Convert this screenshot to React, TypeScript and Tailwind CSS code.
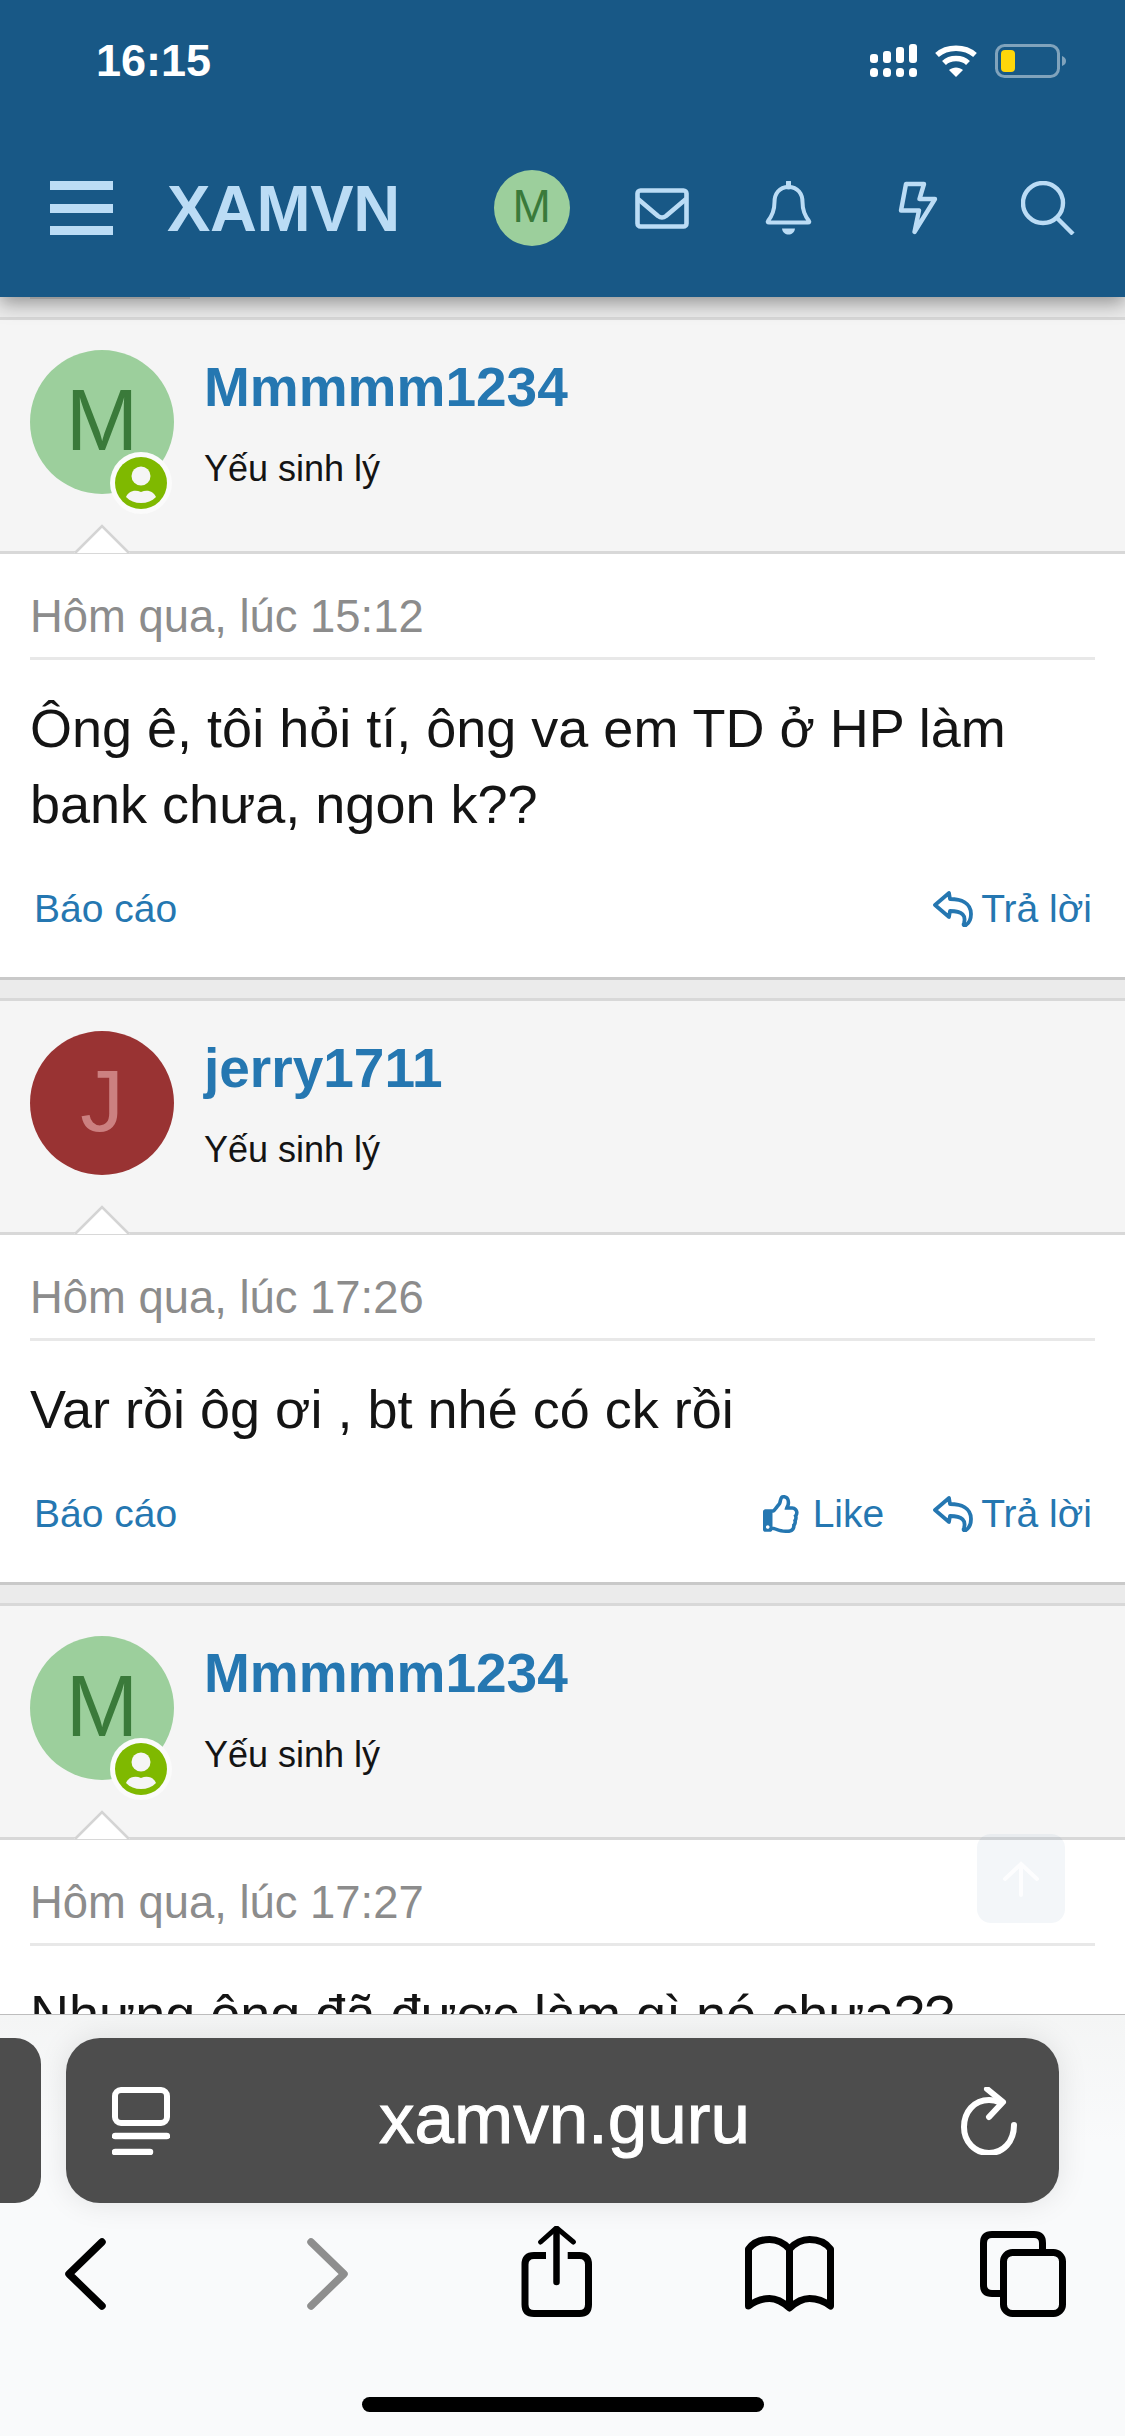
import React from "react";
import { FaRegThumbsUp } from "react-icons/fa";

const SANS = "font-['Liberation_Sans',Arial,sans-serif]";

function ReplyIcon() {
  return (
    <svg width="40" height="36" viewBox="0 0 40 36" fill="none" stroke="#2577b1" strokeWidth="3.8" strokeLinejoin="round" strokeLinecap="round">
      <path d="M2 14 L16 2 L17 8 C28 8 38 12 38 23 C38 28 36 32 33 34 C31 35 30 34 31 32 C33 25 30 20 17 20 L16 26 Z" />
    </svg>
  );
}

function Badge() {
  return (
    <div className="absolute right-[2px] bottom-[-20px] w-[62px] h-[62px] rounded-full bg-[#fbfbfb] flex items-center justify-center">
      <svg width="52" height="52" viewBox="0 0 52 52">
        <circle cx="26" cy="26" r="26" fill="#7fb900" />
        <circle cx="26" cy="19" r="9.5" fill="#f5f5f5" />
        <path d="M11 40 C13 35 19 32 26 35 C33 32 39 35 41 40 C37 44 32 46 26 46 C20 46 15 44 11 40 Z" fill="#f5f5f5" />
      </svg>
    </div>
  );
}

function Post({ name, letter, avatarBg, letterColor, badge, time, lines, like, clip }: {
  name: string; letter: string; avatarBg: string; letterColor: string; badge?: boolean; time: string; lines: string[]; like?: boolean; clip?: boolean;
}) {
  return (
    <div className="border-t-[3px] border-b-[3px] border-t-[#d8d8d8] border-b-[#c9c9c9] mb-[18px] bg-white shrink-0">
      <div className="relative h-[231px] bg-[#f5f5f5] flex pl-[30px] pt-[30px]">
        <div className={`relative w-[144px] h-[144px] rounded-full flex items-center justify-center text-[87px] leading-none pb-[6px] ${avatarBg} ${letterColor}`}>
          {letter}
          {badge && <Badge />}
        </div>
        <div className="ml-[30px] flex flex-col">
          <div className="text-[55px] leading-[60px] font-bold mt-[7px] text-[#2577b1]">{name}</div>
          <div className="text-[36px] leading-[44px] mt-[30px] text-[#141414]">Yếu sinh lý</div>
        </div>
        <svg className="absolute left-[74px] bottom-[-3px]" width="56" height="31" viewBox="0 0 56 31">
          <path d="M0 30 L28 2 L56 30 Z" fill="#ffffff" />
          <path d="M1 30 L28 3 L55 30" fill="none" stroke="#d4d4d4" strokeWidth="2.5" />
        </svg>
      </div>
      <div className="border-t-[3px] border-t-[#d8d8d8] px-[30px] pt-[33px]">
        <div className="h-[70px] pb-[10px] text-[45.4px] leading-[60px] text-[#8c8c8c]">{time}</div>
        <div className="h-[3px] bg-[#e8e8e8]" />
        <div className="pt-[30px] pb-[3px] text-[54px] leading-[76px] text-[#141414]">
          {lines.map((l) => <div key={l} className="whitespace-nowrap">{l}</div>)}
        </div>
        {!clip && (
          <div className="mt-[34px] pb-[38px] pl-[4px] pr-[3px] h-[98px] flex items-start justify-between text-[39px] leading-[60px] text-[#2577b1]">
            <span>Báo cáo</span>
            <div className="flex items-center h-[60px]">
              {like && (
                <div className="flex items-center mr-[49px]">
                  <FaRegThumbsUp className="w-[38px] h-[38px] mr-[12px] text-[#2577b1]" />
                  <span>Like</span>
                </div>
              )}
              <ReplyIcon />
              <span className="ml-[8px]">Trả lời</span>
            </div>
          </div>
        )}
      </div>
    </div>
  );
}

export default function App() {
  return (
    <div className={`relative w-[1125px] h-[2436px] overflow-hidden flex flex-col bg-[#ebebeb] ${SANS}`}>
      <header className="relative z-10 h-[297px] shrink-0 bg-[#185886] shadow-[0_6px_18px_rgba(0,0,0,0.38)]">
        <div className="h-[119px] flex items-start justify-between pl-[96px] pr-[58px] pt-[38px]">
          <span className="text-[45px] leading-[46px] font-bold text-white">16:15</span>
          <div className="flex items-center gap-[17px] pt-[6px]">
            <svg width="47" height="34" viewBox="0 0 47 34" fill="#ffffff">
              <rect x="0" y="10" width="8" height="9" rx="3" /><rect x="13" y="7" width="8" height="12" rx="3" /><rect x="26" y="3" width="8" height="16" rx="3" /><rect x="39" y="0" width="8" height="19" rx="3" />
              <rect x="0" y="24" width="8" height="9" rx="3.5" /><rect x="13" y="24" width="8" height="9" rx="3.5" /><rect x="26" y="24" width="8" height="9" rx="3.5" /><rect x="39" y="24" width="8" height="9" rx="3.5" />
            </svg>
            <svg width="44" height="34" viewBox="0 0 44 34" fill="none" stroke="#ffffff" strokeWidth="5.5">
              <path d="M3 11 C13 2 31 2 41 11" />
              <path d="M10 19 C16 13 28 13 34 19" />
              <path d="M22 33 L15 26 C19 22.5 25 22.5 29 26 Z" fill="#ffffff" stroke="none" />
            </svg>
            <svg width="72" height="34" viewBox="0 0 72 34">
              <rect x="1.5" y="1.5" width="62" height="31" rx="8" fill="none" stroke="#ffffff" strokeOpacity="0.45" strokeWidth="3" />
              <rect x="6" y="6" width="14" height="22" rx="4" fill="#ffd60a" />
              <path d="M67 12 C70 13 71 15 71 17 C71 19 70 21 67 22 Z" fill="#ffffff" fillOpacity="0.45" />
            </svg>
          </div>
        </div>
        <nav className="relative h-[178px]">
          <div className="flex items-center h-[178px] text-[#bbdcf5]">
            <div className="ml-[50px] w-[63px] h-[54px] flex flex-col justify-between">
              <div className="h-[9px] bg-[#bbdcf5]" /><div className="h-[9px] bg-[#bbdcf5]" /><div className="h-[9px] bg-[#bbdcf5]" />
            </div>
            <span className="ml-[54px] text-[65px] leading-none font-bold tracking-[-0.4px]">XAMVN</span>
            <div className="ml-[94px] w-[76px] h-[76px] rounded-full bg-[#9ccf9c] text-[#3a7a3a] text-[46px] leading-none pb-[5px] flex items-center justify-center">M</div>
            <svg className="ml-[65px]" width="54" height="41" viewBox="0 0 54 41" fill="none" stroke="#bbdcf5" strokeWidth="4.6" strokeLinejoin="round">
              <rect x="2.5" y="2.5" width="49" height="36" rx="3" />
              <path d="M3 11 L23 28 Q27 31 31 28 L51 11" />
            </svg>
            <svg className="ml-[76px]" width="47" height="54" viewBox="0 0 47 54" fill="none" stroke="#bbdcf5" strokeWidth="4" strokeLinejoin="round">
              <path d="M23.5 6 C33 6 37.5 13 37.5 21 C37.5 30 40 35 44 40 Q45 41.5 43 41.5 L4 41.5 Q2 41.5 3 40 C7 35 9.5 30 9.5 21 C9.5 13 14 6 23.5 6 Z" />
              <path d="M23.5 1 L23.5 6" strokeWidth="5" strokeLinecap="round" />
              <path d="M17 47.5 L30 47.5 C29 55.5 18 55.5 17 47.5 Z" fill="#bbdcf5" stroke="none" />
            </svg>
            <svg className="ml-[86px]" width="40" height="54" viewBox="0 0 40 54" fill="none" stroke="#bbdcf5" strokeWidth="4.4" strokeLinejoin="round">
              <path d="M8 3 L26 3 L21.5 18 L37 18 L16.5 51 L21 29.5 L3 29.5 Z" />
            </svg>
            <svg className="ml-[83px]" width="54" height="54" viewBox="0 0 54 54" fill="none" stroke="#bbdcf5" strokeWidth="4.4">
              <circle cx="22" cy="22" r="20" />
              <path d="M36 37 L52 53" />
            </svg>
          </div>
          <div className="absolute left-[30px] bottom-[-2px] w-[160px] h-[2px] bg-[#9a9a9a]" />
        </nav>
      </header>

      <main className="flex-1 min-h-0 overflow-hidden pt-[20px] flex flex-col">
        <Post name="Mmmmm1234" letter="M" avatarBg="bg-[#9ccf9c]" letterColor="text-[#3a7a3a]" badge time="Hôm qua, lúc 15:12" lines={["Ông ê, tôi hỏi tí, ông va em TD ở HP làm", "bank chưa, ngon k??"]} />
        <Post name="jerry1711" letter="J" avatarBg="bg-[#993333]" letterColor="text-[#cc8080]" time="Hôm qua, lúc 17:26" lines={["Var rồi ôg ơi , bt nhé có ck rồi"]} like />
        <Post name="Mmmmm1234" letter="M" avatarBg="bg-[#9ccf9c]" letterColor="text-[#3a7a3a]" badge time="Hôm qua, lúc 17:27" lines={["Nhưng ông đã được làm gì nó chưa??"]} clip />
      </main>

      <div className="absolute left-[977px] top-[1834px] w-[88px] h-[89px] rounded-[14px] bg-[#185886]/5 flex items-center justify-center">
        <svg width="36" height="36" viewBox="0 0 36 36" fill="none" stroke="#ffffff" strokeWidth="4" strokeLinecap="round" strokeOpacity="0.8">
          <path d="M18 34 L18 3 M2 18 L18 3 L34 18" />
        </svg>
      </div>

      <footer className="relative z-10 h-[422px] shrink-0 border-t-[1px] border-t-[#bdbdbd] bg-[linear-gradient(#f4f5f5,#f9fafb_30%)] pt-[23px]">
        <div className="flex h-[165px]">
          <div className="w-[41px] rounded-r-[26px] bg-[#4d4d4d]" />
          <div className="ml-[25px] w-[993px] rounded-[34px] bg-[#4d4d4d] shadow-[0_0_30px_rgba(0,0,0,0.1)] flex items-center justify-between pl-[46px] pr-[42px] relative">
            <svg width="58" height="68" viewBox="0 0 58 68" fill="none" stroke="#ffffff" strokeWidth="6">
              <rect x="3" y="3" width="52" height="33" rx="6" />
              <path d="M3 49 L55 49" strokeWidth="6.5" strokeLinecap="round" />
              <path d="M3 65 L38 65" strokeWidth="6.5" strokeLinecap="round" />
            </svg>
            <span className="absolute left-[313px] top-[36px] text-[71px] leading-[90px] text-white [-webkit-text-stroke:1px_#ffffff]">xamvn.guru</span>
            <svg width="56" height="68" viewBox="0 0 56 68" fill="none" stroke="#ffffff" strokeWidth="6" strokeLinecap="round" strokeLinejoin="round">
              <path d="M38 15 C36 14 32 13 28 13 C13 13 3 25 3 40 C3 55 14 66 28 66 C42 66 53 55 53 38" />
              <path d="M26 2 L42 15 L28 30" />
            </svg>
          </div>
        </div>
        <div className="relative flex items-start h-[233px]">
          <svg className="absolute left-[65px] top-[35px]" width="41" height="72" viewBox="0 0 41 72" fill="none" stroke="#000000" strokeWidth="7.5" strokeLinecap="round" strokeLinejoin="round">
            <path d="M37 4 L4 36 L37 68" />
          </svg>
          <svg className="absolute left-[307px] top-[35px]" width="41" height="72" viewBox="0 0 41 72" fill="none" stroke="#8e8e8e" strokeWidth="7.5" strokeLinecap="round" strokeLinejoin="round">
            <path d="M4 4 L37 36 L4 68" />
          </svg>
          <svg className="absolute left-[521px] top-[23px]" width="72" height="92" viewBox="0 0 72 92" fill="none" stroke="#000000" strokeWidth="7" strokeLinejoin="round">
            <path d="M25 29.5 L13 29.5 Q4 29.5 4 38.5 L4 78.5 Q4 87.5 13 87.5 L58.5 87.5 Q67.5 87.5 67.5 78.5 L67.5 38.5 Q67.5 29.5 58.5 29.5 L46.7 29.5" />
            <path d="M35.5 56 L35.5 4" strokeWidth="6.5" strokeLinecap="round" />
            <path d="M19.6 16 L35.5 1.8 L52.4 16" strokeWidth="5" strokeLinecap="round" />
          </svg>
          <svg className="absolute left-[745px] top-[33px]" width="89" height="77" viewBox="0 0 89 77" fill="none" stroke="#000000" strokeWidth="7" strokeLinejoin="round">
            <path d="M44.5 13 C38 6 31 3.5 24.5 3.5 C16 3.5 8 7 3.5 13 L3.5 70 C10 65 17 62.5 24.5 62.5 C32 62.5 38 66 44.5 72 C51 66 57 62.5 64.5 62.5 C72 62.5 79 65 85.5 70 L85.5 13 C81 7 73 3.5 64.5 3.5 C58 3.5 51 6 44.5 13 Z" />
            <path d="M44.5 13 L44.5 72" />
          </svg>
          <svg className="absolute left-[980px] top-[28px]" width="87" height="86" viewBox="0 0 87 86" fill="none" stroke="#000000" strokeWidth="7" strokeLinejoin="round">
            <path d="M20 62.5 L12 62.5 Q3.5 62.5 3.5 54 L3.5 12 Q3.5 3.5 12 3.5 L54 3.5 Q62.5 3.5 62.5 12 L62.5 20" />
            <rect x="23.5" y="21.5" width="59" height="61" rx="9" />
          </svg>
          <div className="absolute left-[362px] top-[194px] w-[402px] h-[15px] rounded-full bg-black" />
        </div>
      </footer>
    </div>
  );
}
